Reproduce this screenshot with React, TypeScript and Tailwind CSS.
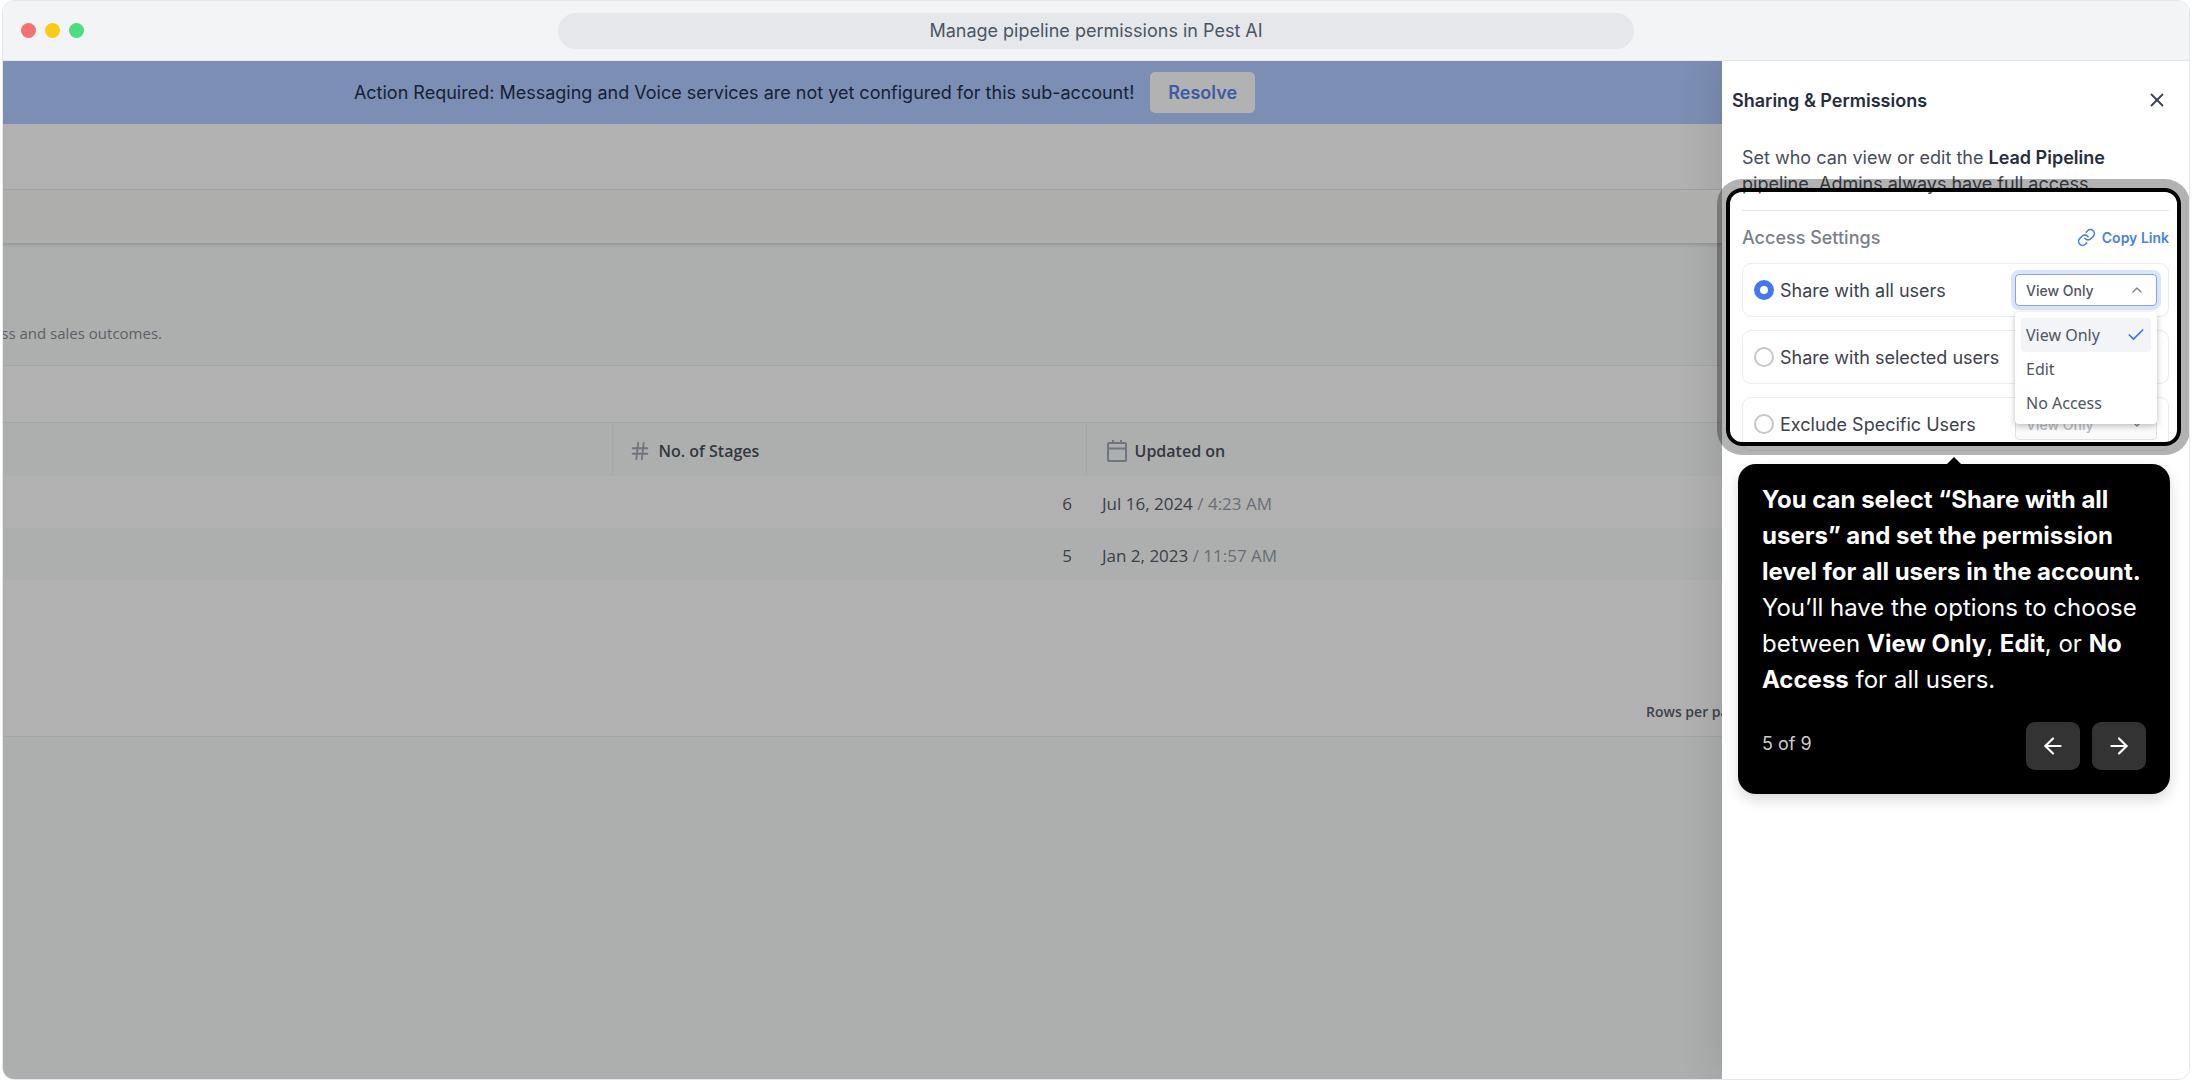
import clsx from "clsx";
import {
  ArrowLeft,
  ArrowRight,
  Check,
  ChevronDown,
  ChevronUp,
  Hash,
  Link,
  X,
} from "lucide-react";

const PIPELINES = [
  { stages: 6, date: "Jul 16, 2024", time: "4:23 AM" },
  { stages: 5, date: "Jan 2, 2023", time: "11:57 AM" },
];

const ACCESS_OPTIONS = [
  { id: "all", label: "Share with all users" },
  { id: "selected", label: "Share with selected users" },
  { id: "exclude", label: "Exclude Specific Users" },
];

const PERMISSIONS = ["View Only", "Edit", "No Access"];

function WindowBar() {
  return (
    <header className="relative flex h-15 items-center justify-center border-b border-[#e5e7eb] bg-[#f3f4f6]">
      <div className="absolute left-[18px] flex gap-[9px]">
        <span className="size-[15px] rounded-full bg-[#f87171]" />
        <span className="size-[15px] rounded-full bg-[#facc15]" />
        <span className="size-[15px] rounded-full bg-[#4ade80]" />
      </div>
      <h1 className="h-9 w-[1076px] rounded-full bg-[#e5e7eb] text-center text-[18px] leading-9 text-[#4b5563]">
        Manage pipeline permissions in Pest AI
      </h1>
    </header>
  );
}

function Banner() {
  return (
    <div className="flex h-[63px] items-center justify-center gap-4 bg-[#7c8eb3] pr-[116px]">
      <p className="text-[18px] whitespace-nowrap text-[#172036]">
        Action Required: Messaging and Voice services are not yet configured for
        this sub-account!
      </p>
      <button className="h-[41px] rounded-[5px] bg-[#b2b2b2] px-[18px] text-[18px] font-semibold text-[#3b5ba5]">
        Resolve
      </button>
    </div>
  );
}

function CalendarIcon() {
  return (
    <svg
      className="text-[#70747e]"
      width="20"
      height="22"
      viewBox="0 0 20 22"
      fill="none"
      stroke="currentColor"
      strokeWidth="2"
      strokeLinejoin="round"
    >
      <rect x="1" y="3" width="18" height="18" rx="1" />
      <path d="M1 8.500h18M6 0v3M14 0v3" />
    </svg>
  );
}

function PipelineTable() {
  return (
    <table className="w-full table-fixed border-collapse text-left">
      <colgroup>
        <col className="w-[609px]" />
        <col className="w-[474px]" />
        <col />
      </colgroup>
      <thead>
        <tr className="h-[53px] bg-[#adafae] text-[16px] text-[#33383f]">
          <th />
          <th className="border-l border-[#a5a8a8] pt-[3px] pl-4">
            <span className="flex items-center gap-2 font-semibold">
              <Hash className="size-[22px] text-[#70747e]" strokeWidth={2} />
              No. of Stages
            </span>
          </th>
          <th className="border-l border-[#a5a8a8] pt-[3px] pl-5">
            <span className="flex items-center gap-2 font-semibold">
              <CalendarIcon />
              Updated on
            </span>
          </th>
        </tr>
      </thead>
      <tbody>
        {PIPELINES.map((v, i) => (
          <tr
            key={v.date}
            className={clsx(
              "h-[52px] text-[17px] text-[#3a3f49]",
              i % 2 ? "bg-[#adafae]" : "bg-[#b1b1b1]"
            )}
          >
            <td />
            <td className="pt-[3px] pr-[14px] text-right">{v.stages}</td>
            <td className="pt-[3px] pl-4">
              {v.date} <span className="text-[#6a6e74]">/ {v.time}</span>
            </td>
          </tr>
        ))}
      </tbody>
    </table>
  );
}

function PermissionMenu() {
  return (
    <ul
      role="listbox"
      aria-label="Permission level"
      className="absolute top-[48px] right-[11px] z-10 w-[142px] rounded-[4px] bg-white px-[6px] pt-[6px] pb-1 shadow-[0_2px_6px_rgba(0,0,0,0.25)]"
    >
      {PERMISSIONS.map((v, i) => (
        <li
          key={v}
          role="option"
          aria-selected={i === 0}
          className={clsx(
            "flex h-[34px] items-center justify-between rounded-[4px] px-[5px] font-['Noto_Sans',sans-serif] text-[16px] text-[#50555f]",
            i === 0 && "bg-[#f3f4f7]"
          )}
        >
          {v}
          {i === 0 && (
            <Check className="size-5 text-[#3f76dd]" strokeWidth={2} />
          )}
        </li>
      ))}
    </ul>
  );
}

function PermissionSelect({ open }: { open?: boolean }) {
  const Chevron = open ? ChevronUp : ChevronDown;

  return (
    <div className="relative">
      <select
        aria-label="Permission"
        disabled={!open}
        className={clsx(
          "block h-8 w-[142px] appearance-none rounded-[4px] border pl-[10px] text-[14px] font-medium",
          open
            ? "border-[#84a5e6] bg-white text-[#50555f] ring-4 ring-[#dae5fb]"
            : "border-[#dfe1e5] bg-[#fafafb] text-[#b9bcc2] opacity-100"
        )}
      >
        {PERMISSIONS.map((v) => (
          <option key={v}>{v}</option>
        ))}
      </select>
      <Chevron
        className="pointer-events-none absolute top-2 right-3 size-4 text-[#7b808a]"
        strokeWidth={2}
      />
    </div>
  );
}

function SharingPanel() {
  return (
    <aside className="relative w-[467px] shrink-0 rounded-tl-[4px] bg-white shadow-[-4px_0_40px_rgba(0,0,0,0.12)]">
      <div className="flex h-[78px] items-center justify-between pr-[21px] pl-[10px]">
        <h2 className="text-[18px] font-semibold text-[#272d3a]">
          Sharing &amp; Permissions
        </h2>
        <button aria-label="Close">
          <X className="size-[22px] text-[#3c4350]" strokeWidth={2} />
        </button>
      </div>
      <div className="px-5 pt-[6px]">
        <p className="border-b border-[#e6e7ea] pb-[13px] text-[18px] leading-[26px] text-[#474c57]">
          Set who can view or edit the{" "}
          <b className="font-semibold text-[#272d3a]">Lead Pipeline</b>
          <br />
          pipeline. Admins always have full access.
        </p>
        <div className="flex h-[52px] items-center justify-between">
          <h3 className="text-[18px] font-medium text-[#7b7f88]">
            Access Settings
          </h3>
          <a
            href="#copy"
            className="flex items-center gap-[6px] text-[14px] font-semibold text-[#4a7fe0]"
          >
            <Link className="size-[19px]" strokeWidth={2} />
            Copy Link
          </a>
        </div>
        <div className="flex flex-col gap-[13px] border-b border-[#f0f1f3] pb-[14px]">
          {ACCESS_OPTIONS.map((v) => (
            <div
              key={v.id}
              className="relative flex h-[54px] items-center justify-between rounded-[9px] border border-[#ebecef] px-[11px]"
            >
              <label className="flex items-center gap-[6px] text-[18px] text-[#3c414c]">
                <input
                  type="radio"
                  name="access"
                  defaultChecked={v.id === "all"}
                  className="size-5 appearance-none rounded-full border-2 border-[#c4c6ca] bg-white checked:border-[6px] checked:border-[#4379ea]"
                />
                {v.label}
              </label>
              {v.id !== "selected" && (
                <PermissionSelect open={v.id === "all"} />
              )}
              {v.id === "all" && <PermissionMenu />}
            </div>
          ))}
        </div>
      </div>
      <Spotlight />
      <Tooltip />
    </aside>
  );
}

// frame around the highlighted part of the panel
function Spotlight() {
  return (
    <div className="pointer-events-none absolute top-[127px] left-1 z-20 h-[258px] w-[455px] rounded-[16px] border-4 border-black shadow-[0_0_0_9px_rgba(0,0,0,0.3)]" />
  );
}

function Tooltip() {
  return (
    <div className="absolute top-[403px] left-4 z-30 w-[432px] rounded-[18px] bg-black px-6 pt-[18px] pb-6 text-white shadow-[0_6px_14px_rgba(0,0,0,0.15)]">
      <svg
        className="absolute -top-[7px] left-[209px]"
        width="14"
        height="8"
        viewBox="0 0 14 8"
      >
        <path d="M0 8V7L7 0l7 7v1z" fill="#000" />
      </svg>
      <p className="text-[24px] leading-9">
        <b>
          You can select “Share with all users” and set the permission level for
          all users in the account.
        </b>{" "}
        You’ll have the options to choose between <b>View Only</b>, <b>Edit</b>,
        or <b>No Access</b> for all users.
      </p>
      <div className="mt-6 flex gap-3">
        <span className="mr-auto pt-2 text-[18px] text-[#cccccc]">5 of 9</span>
        <button
          aria-label="Previous"
          className="flex h-12 w-[54px] items-center justify-center rounded-[9px] bg-[#333333]"
        >
          <ArrowLeft className="size-[26px]" />
        </button>
        <button
          aria-label="Next"
          className="flex h-12 w-[54px] items-center justify-center rounded-[9px] bg-[#333333]"
        >
          <ArrowRight className="size-[26px]" />
        </button>
      </div>
    </div>
  );
}

export default function App() {
  return (
    <div className="flex min-h-screen bg-white px-0.5 font-[Inter,sans-serif]">
      <div className="flex flex-1 flex-col overflow-hidden rounded-[12px] border border-[#e5e7eb]">
        <WindowBar />
        <div className="flex flex-1 overflow-hidden">
          <main className="flex min-w-0 flex-1 flex-col overflow-hidden bg-[#adafae]">
            <Banner />
            <div className="h-[66px] border-b border-[#a3a3a3] bg-[#b1b1b1]" />
            <div className="z-10 h-[53px] bg-[#aeaeac] shadow-[0_2px_3px_rgba(0,0,0,0.15)]" />
            <div className="flex h-[122px] items-end font-['Open_Sans',sans-serif]">
              <p className="flex w-[159px] justify-end overflow-hidden pb-[21px] text-[15px] whitespace-nowrap text-[#5c6066]">
                ess and sales outcomes.
              </p>
            </div>
            <section className="border-y border-[#a3a5a5] bg-[#b1b1b1] font-['Open_Sans',sans-serif]">
              <div className="h-[57px] border-b border-[#a3a5a5]" />
              <PipelineTable />
              <div className="flex h-[156px] items-end justify-end overflow-hidden">
                <p className="w-[76px] pb-[14px] text-[14px] font-semibold whitespace-nowrap text-[#3d424c]">
                  Rows per page
                </p>
              </div>
            </section>
          </main>
          <SharingPanel />
        </div>
      </div>
    </div>
  );
}
